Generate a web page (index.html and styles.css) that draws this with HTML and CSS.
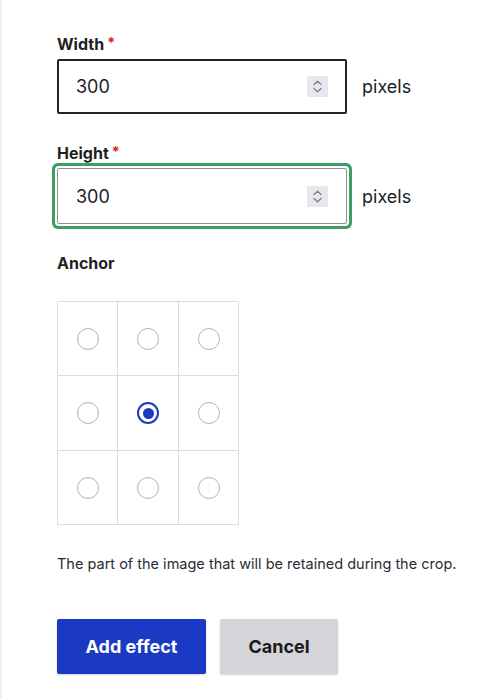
FILE: index.html
```html
<!DOCTYPE html>
<html lang="en">
<head>
<meta charset="utf-8">
<title>Crop effect</title>
<link rel="stylesheet" href="styles.css">
</head>
<body>
<div class="page">
  <div class="field field-width">
    <div class="label">Width<span class="req">*</span></div>
    <div class="row">
      <div class="input is-hover">
        <span class="value">300</span>
        <span class="spin">
          <svg width="21" height="21" viewBox="0 0 21 21" aria-hidden="true">
            <path d="M7 8.5 L10.5 5.2 L14 8.5" fill="none" stroke="#7c7d86" stroke-width="1.2" stroke-linecap="round" stroke-linejoin="round"/>
            <path d="M7 12.5 L10.5 15.8 L14 12.5" fill="none" stroke="#7c7d86" stroke-width="1.2" stroke-linecap="round" stroke-linejoin="round"/>
          </svg>
        </span>
      </div>
      <span class="unit">pixels</span>
    </div>
  </div>

  <div class="field field-height">
    <div class="label">Height<span class="req">*</span></div>
    <div class="row">
      <div class="input is-focus">
        <span class="value">300</span>
        <span class="spin">
          <svg width="21" height="21" viewBox="0 0 21 21" aria-hidden="true">
            <path d="M7 8.5 L10.5 5.2 L14 8.5" fill="none" stroke="#7c7d86" stroke-width="1.2" stroke-linecap="round" stroke-linejoin="round"/>
            <path d="M7 12.5 L10.5 15.8 L14 12.5" fill="none" stroke="#7c7d86" stroke-width="1.2" stroke-linecap="round" stroke-linejoin="round"/>
          </svg>
        </span>
      </div>
      <span class="unit">pixels</span>
    </div>
  </div>

  <div class="field field-anchor">
    <div class="label">Anchor</div>
    <div class="anchor-grid">
      <div class="cell"><span class="radio"></span></div>
      <div class="cell"><span class="radio"></span></div>
      <div class="cell"><span class="radio"></span></div>
      <div class="cell"><span class="radio"></span></div>
      <div class="cell"><span class="radio checked"></span></div>
      <div class="cell"><span class="radio"></span></div>
      <div class="cell"><span class="radio"></span></div>
      <div class="cell"><span class="radio"></span></div>
      <div class="cell"><span class="radio"></span></div>
    </div>
    <p class="desc">The part of the image that will be retained during the crop.</p>
  </div>

  <div class="actions">
    <span class="btn btn-primary">Add effect</span>
    <span class="btn btn-secondary">Cancel</span>
  </div>
</div>
</body>
</html>
```

FILE: styles.css
```css
html, body {
  margin: 0;
  padding: 0;
  background: #ffffff;
}

body {
  font-family: Inter, "Liberation Sans", Arial, sans-serif;
  color: #222330;
  width: 478px;
  height: 698px;
  overflow: hidden;
}

.page {
  border-left: 2px solid #efeef5;
  padding-left: 55px;
  padding-top: 33px;
  min-height: 698px;
  box-sizing: border-box;
}

.label {
  font-size: 16px;
  line-height: 20px;
  font-weight: 700;
  color: #1f1f24;
  margin-bottom: 5px;
}

.req {
  color: #d01f1f;
  margin-left: 3px;
  font-size: 14px;
  vertical-align: 2px;
}

.row {
  display: flex;
  align-items: center;
  gap: 15px;
}

.input {
  box-sizing: border-box;
  width: 290px;
  height: 56px;
  border: 1px solid #8f9096;
  border-radius: 2px;
  display: flex;
  align-items: center;
  justify-content: space-between;
  padding: 0 18px 0 18px;
  background: #fff;
}

.input.is-hover {
  border: 2px solid #222330;
  padding: 0 17px 0 17px;
  height: 55px;
}

.input.is-focus {
  box-shadow: 0 0 0 2px #ffffff, 0 0 0 5px #3e9d60;
  border-radius: 2px;
}

.value {
  font-size: 18px;
  color: #1c1c22;
}

.spin {
  display: block;
  width: 21px;
  height: 21px;
  background: #e7e7ed;
  border-radius: 1px;
}

.spin svg {
  display: block;
}

.unit {
  font-size: 18px;
  color: #1c1c22;
}

.field-height {
  margin-top: 28px;
}

.field-anchor {
  margin-top: 29px;
}

.field-anchor .label {
  margin-bottom: 28px;
}

.anchor-grid {
  display: grid;
  grid-template-columns: 60px 61px 60px;
  grid-template-rows: 74px 75px 74px;
  border-top: 1px solid #dcdcdf;
  border-left: 1px solid #dcdcdf;
  box-sizing: content-box;
  width: 181px;
}

.cell {
  border-right: 1px solid #dcdcdf;
  border-bottom: 1px solid #dcdcdf;
  display: flex;
  align-items: center;
  justify-content: center;
}

.radio {
  box-sizing: border-box;
  width: 22px;
  height: 22px;
  border-radius: 50%;
  border: 1px solid #b3b3b8;
  background: #fff;
  display: flex;
  align-items: center;
  justify-content: center;
}

.radio.checked {
  border: 2px solid #1b3ac4;
}

.radio.checked::after {
  content: "";
  width: 11px;
  height: 11px;
  border-radius: 50%;
  background: #1b3ac4;
}

.desc {
  margin: 29px 0 0 0;
  font-size: 14.5px;
  line-height: 20px;
  color: #2b2c33;
}

.actions {
  margin-top: 45px;
  display: flex;
  gap: 14px;
}

.btn {
  display: flex;
  align-items: center;
  justify-content: center;
  height: 55px;
  box-sizing: border-box;
  border-radius: 2px;
  font-size: 18px;
  font-weight: 700;
  box-shadow: 0 1px 2px rgba(0, 0, 0, 0.18);
}

.btn-primary {
  width: 149px;
  background: #1b3ac4;
  color: #ffffff;
}

.btn-secondary {
  width: 118px;
  background: #d4d4d9;
  color: #1a1a20;
}
```
